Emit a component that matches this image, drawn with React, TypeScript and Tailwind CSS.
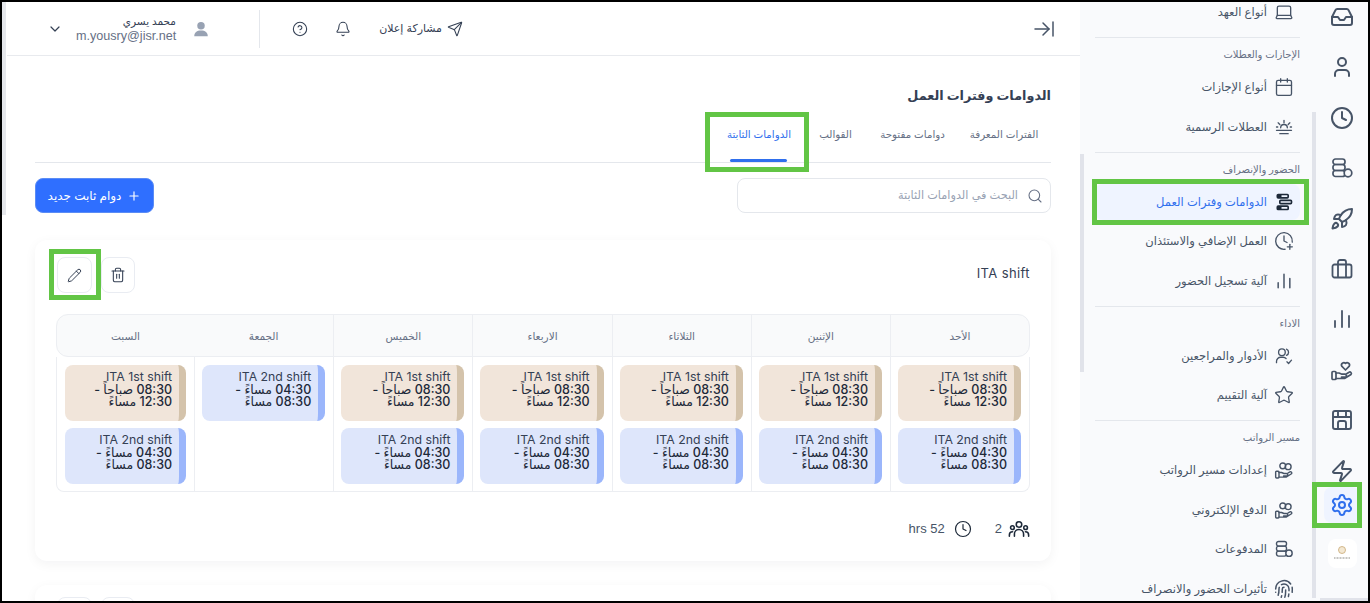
import {
  ArrowRightToLine,
  Bell,
  Calendar,
  ChevronDown,
  Clock,
  ClockPlus,
  CircleHelp,
  Fingerprint,
  Inbox,
  Laptop,
  Pencil,
  Plus,
  Rocket,
  Search,
  Send,
  Settings,
  Star,
  Trash2,
  User,
  Zap
} from 'lucide-react'
import type { ReactNode } from 'react'

type IconProps = { className?: string }

function DbCoin({ className }: IconProps) {
  return (
    <svg viewBox="0 0 24 24" fill="none" stroke="currentColor" strokeWidth="1.7" className={className}>
      <rect x="3" y="3" width="12" height="5.500" rx="2.500" />
      <rect x="3" y="8.500" width="12" height="6" rx="2.500" />
      <rect x="3" y="14.500" width="12" height="6" rx="2.500" />
      <circle cx="18" cy="17" r="3.800" fill="#f9fafc" />
    </svg>
  )
}

function Bars({ className }: IconProps) {
  return (
    <svg viewBox="0 0 24 24" fill="none" stroke="currentColor" strokeWidth="1.8" strokeLinecap="round" className={className}>
      <path d="M5 20v-6M12 20V4M19 20V9" />
    </svg>
  )
}

function Case({ className }: IconProps) {
  return (
    <svg viewBox="0 0 24 24" fill="none" stroke="currentColor" strokeWidth="1.8" className={className}>
      <rect x="2.500" y="7.500" width="19" height="13" rx="2" />
      <path d="M8 7.500V5a2 2 0 0 1 2-2h4a2 2 0 0 1 2 2v2.500M8 7.500v13M16 7.500v13" />
    </svg>
  )
}

function Shop({ className }: IconProps) {
  return (
    <svg viewBox="0 0 24 24" fill="none" stroke="currentColor" strokeWidth="1.9" className={className}>
      <rect x="3" y="3" width="18" height="18" rx="2" />
      <path d="M3 9h18M8 3v6M16 3v6M8 21v-6a2 2 0 0 1 2-2h4a2 2 0 0 1 2 2v6" />
    </svg>
  )
}

function Horizon({ className }: IconProps) {
  return (
    <svg viewBox="0 0 24 24" fill="none" stroke="currentColor" strokeWidth="1.6" strokeLinecap="round" className={className}>
      <path d="M3 16h18M7 20h10M8 13a4 4 0 0 1 8 0M12 4v3M5 7l2 2M19 7l-2 2M3 12h1.500M19.500 12H21" />
    </svg>
  )
}

function ShiftBars({ className }: IconProps) {
  return (
    <svg viewBox="0 0 24 24" fill="none" stroke="currentColor" strokeWidth="2" className={className}>
      <rect x="4" y="3" width="13" height="4" rx="1" />
      <rect x="7" y="10" width="14" height="4" rx="1" />
      <rect x="4" y="17" width="13" height="4" rx="1" />
      <path d="M4 5h5M4 19h5" strokeWidth="3" />
    </svg>
  )
}

function UsersCheck({ className }: IconProps) {
  return (
    <svg viewBox="0 0 24 24" fill="none" stroke="currentColor" strokeWidth="1.6" strokeLinecap="round" strokeLinejoin="round" className={className}>
      <circle cx="9.500" cy="7.500" r="4" />
      <path d="M15 3.800a4 4 0 0 1 0 7.400M3 20v-1.500a5 5 0 0 1 5-5h3a5 5 0 0 1 3.500 1.500M15.500 19l2 2 3.500-4" />
    </svg>
  )
}

// open hand with a cuff on the left, the top part changes per icon
function HandBase() {
  return (
    <>
      <rect x="2" y="13.500" width="4" height="8" rx="1" />
      <path d="M6 15h3l3 1.200h3a1.500 1.500 0 0 1 0 3h-3.500M6 20.500h8.500l6.500-4a1.500 1.500 0 0 0-2-2.200l-3.500 2.200" />
    </>
  )
}

function HandHeartIcon({ className }: IconProps) {
  return (
    <svg viewBox="0 0 24 24" fill="none" stroke="currentColor" strokeWidth="1.7" strokeLinejoin="round" strokeLinecap="round" className={className}>
      <HandBase />
      <path d="M15.500 12l-3.800-3.800a2.400 2.400 0 0 1 3.800-2.800 2.400 2.400 0 0 1 3.800 2.800z" />
    </svg>
  )
}

function HandCoinsIcon({ className }: IconProps) {
  return (
    <svg viewBox="0 0 24 24" fill="none" stroke="currentColor" strokeWidth="1.7" strokeLinejoin="round" strokeLinecap="round" className={className}>
      <HandBase />
      <circle cx="10.500" cy="7" r="3.500" />
      <circle cx="17" cy="8" r="3.500" />
    </svg>
  )
}

function TeamIcon({ className }: IconProps) {
  return (
    <svg viewBox="0 0 24 24" fill="none" stroke="currentColor" strokeWidth="1.7" strokeLinecap="round" className={className}>
      <circle cx="12" cy="7" r="3" />
      <circle cx="4.800" cy="10.500" r="2" />
      <circle cx="19.200" cy="10.500" r="2" />
      <path d="M7 20v-2.500a5 5 0 0 1 10 0V20M1.500 20v-1.500a3.500 3.500 0 0 1 3.500-3.500M22.500 20v-1.500A3.500 3.500 0 0 0 19 15" />
    </svg>
  )
}

const RAIL_ICONS = [Inbox, User, Clock, DbCoin, Rocket, Case, Bars, HandHeartIcon, Shop, Zap]

function NavRow({ icon, label, active }: { icon: ReactNode; label: string; active?: boolean }) {
  return (
    <div
      className={
        'h-[36px] flex items-center gap-[7px] pr-[6px] pl-[8px] rounded-lg text-[11.500px] ' +
        (active ? 'bg-[#eff4ff] text-[#2f6fed]' : 'text-[#475467]')
      }
    >
      <span className={'shrink-0 ' + (active ? 'text-[#1d2939]' : 'text-[#475467]')}>{icon}</span>
      <span className="whitespace-nowrap mt-[2px]">{label}</span>
    </div>
  )
}

function NavSection({ title, children }: { title: string; children: ReactNode }) {
  return (
    <div className="border-t border-[#e4e7ec] mt-[7px] pt-[9px]">
      <div className="h-[14px] leading-[14px] text-[10px] text-[#667085] mb-[8px]">{title}</div>
      <div className="flex flex-col gap-[3.500px]">{children}</div>
    </div>
  )
}

function GreenBox({ className }: IconProps) {
  return <span className={'absolute border-[5px] border-[#62c545] pointer-events-none ' + className} />
}

const DAYS = ['الأحد', 'الإثنين', 'الثلاثاء', 'الاربعاء', 'الخميس', 'الجمعة', 'السبت']

function ShiftChip({ second }: { second?: boolean }) {
  return (
    <div
      className={
        'h-[56px] rounded-lg border-r-[7px] pr-[7px] pt-[6px] text-[12px] leading-[12.500px] text-[#344054] ' +
        (second ? 'bg-[#dee6fb] border-[#9bb6fb]' : 'bg-[#f1e5da] border-[#d4c3ab]')
      }
    >
      <div className="text-[12.300px]">{second ? 'ITA 2nd shift' : 'ITA 1st shift'}</div>
      <div className="text-[12.500px] font-medium text-[#1d2939]">{second ? '04:30 مساءً -' : '08:30 صباحاً -'}</div>
      <div className="text-[12.500px] font-medium text-[#1d2939]">{second ? '08:30 مساءً' : '12:30 مساءً'}</div>
    </div>
  )
}

function IconButton({ children, narrow }: { children: ReactNode; narrow?: boolean }) {
  return (
    <button
      className={
        'h-[36px] flex items-center justify-center rounded-lg border border-[#e9ecf2] bg-white text-[#344054] ' +
        (narrow ? 'w-[34px]' : 'w-[35px]')
      }
    >
      {children}
    </button>
  )
}

function Tab({ label, width }: { label: string; width: string }) {
  return <span className={'h-[46px] flex items-center justify-center whitespace-nowrap ' + width}>{label}</span>
}

export default function App() {
  return (
    <div
      dir="rtl"
      className="relative w-[1370px] h-[603px] overflow-hidden border-2 border-black bg-white flex font-[Inter,'DejaVu_Sans',sans-serif]"
    >
      {/* Icon rail */}
      <aside className="relative z-10 w-[56px] shrink-0 bg-[#f9fafc] flex flex-col items-center">
        <span className="absolute left-0 top-[110px] w-[4px] h-[486px] bg-[#e1e3ea]" />
        <span className="absolute right-0 bottom-0 w-[48px] h-[3px] bg-[#e1e3ea]" />
        <div className="flex flex-col items-center gap-[20.400px] text-[#475467] mr-[-4px]">
          {RAIL_ICONS.map((Icon, i) => (
            <div key={i} className="h-[30px] flex items-center justify-center">
              <Icon className="w-[24px] h-[24px]" />
            </div>
          ))}
        </div>
        <div className="relative mt-[1px] w-[36px] h-[36px] mr-[-4px] rounded-lg bg-[#eff4ff] flex items-center justify-center text-[#2f6fed]">
          <Settings className="w-[24px] h-[24px]" />
          <GreenBox className="-top-[5px] -bottom-[5px] -left-[12px] -right-[2px]" />
        </div>
        <div className="mt-[16px] mr-[-4px] w-[29px] h-[29px] rounded-lg bg-white flex items-center justify-center">
          <svg viewBox="0 0 24 24" className="w-[24px] h-[24px]">
            <circle cx="12" cy="9" r="3.500" fill="#f3e8d3" stroke="#c9a873" strokeWidth="0.800" />
            <path d="M4 17h16" stroke="#8d8d86" strokeWidth="1.200" strokeDasharray="1 0.500" />
          </svg>
        </div>
      </aside>

      {/* Secondary nav */}
      <nav className="relative w-[232px] shrink-0 bg-[#f9fafc] overflow-hidden pr-[12px] pl-[15px]">
        <div className="-mt-[8px]">
          <NavRow icon={<Laptop className="w-[20px] h-[20px]" strokeWidth={1.6} />} label="أنواع العهد" />
          <NavSection title="الإجازات والعطلات">
            <NavRow icon={<Calendar className="w-[20px] h-[20px]" strokeWidth={1.6} />} label="أنواع الإجازات" />
            <NavRow icon={<Horizon className="w-[20px] h-[20px]" />} label="العطلات الرسمية" />
          </NavSection>
          <NavSection title="الحضور والإنصراف">
            <div className="relative">
              <NavRow icon={<ShiftBars className="w-[20px] h-[20px]" />} label="الدوامات وفترات العمل" active />
              <GreenBox className="-top-[5px] -bottom-[5px] -left-[3px] -right-[9px]" />
            </div>
            <NavRow icon={<ClockPlus className="w-[20px] h-[20px]" strokeWidth={1.6} />} label="العمل الإضافي والاستئذان" />
            <NavRow icon={<Bars className="w-[20px] h-[20px]" />} label="آلية تسجيل الحضور" />
          </NavSection>
          <NavSection title="الاداء">
            <NavRow icon={<UsersCheck className="w-[20px] h-[20px]" />} label="الأدوار والمراجعين" />
            <NavRow icon={<Star className="w-[20px] h-[20px]" strokeWidth={1.6} />} label="آلية التقييم" />
          </NavSection>
          <NavSection title="مسير الرواتب">
            <NavRow icon={<HandCoinsIcon className="w-[20px] h-[20px]" />} label="إعدادات مسير الرواتب" />
            <NavRow icon={<HandCoinsIcon className="w-[20px] h-[20px]" />} label="الدفع الإلكتروني" />
            <NavRow icon={<DbCoin className="w-[20px] h-[20px]" />} label="المدفوعات" />
            <NavRow icon={<Fingerprint className="w-[20px] h-[20px]" strokeWidth={1.8} />} label="تأثيرات الحضور والانصراف" />
          </NavSection>
        </div>
        <span className="absolute left-0 top-[152px] w-[4px] h-[218px] bg-[#e1e3ea]" />
      </nav>

      {/* Main column */}
      <main className="relative flex-1 min-w-0 bg-white overflow-hidden">
        <span className="absolute left-0 top-0 w-[4px] h-[213px] bg-[#e5e7eb]" />

        <header className="ml-[5px] h-[54px] border-b border-[#e8eaee] flex items-center justify-between pr-[24px] pl-[40px]">
          <ArrowRightToLine className="w-[24px] h-[24px] text-[#475467]" strokeWidth={1.5} />
          <div className="flex items-center text-[#344054]">
            <div className="w-[84px] flex items-center gap-[5px] text-[11px] whitespace-nowrap ml-[28px]">
              <Send className="w-[16px] h-[16px]" strokeWidth={1.6} />
              <span>مشاركة إعلان</span>
            </div>
            <Bell className="w-[16px] h-[16px] ml-[27px]" strokeWidth={1.6} />
            <CircleHelp className="w-[16px] h-[16px] ml-[32px]" strokeWidth={1.6} />
            <span className="w-px h-[38px] bg-[#e4e7ec] ml-[49px]" />
            <svg viewBox="0 0 24 24" fill="#98a2b3" className="w-[18px] h-[18px] ml-[16px]">
              <circle cx="12" cy="7.500" r="5" />
              <path d="M3 21.500c0-5 3.500-7.500 9-7.500s9 2.500 9 7.500z" />
            </svg>
            <div className="w-[100px] ml-[13px]">
              <div className="text-[10.500px] leading-[15px] text-[#344054] whitespace-nowrap">محمد يسري</div>
              <div dir="ltr" className="text-[12.600px] leading-[15px] text-[#667085] text-right whitespace-nowrap font-['Liberation_Sans',sans-serif]">
                m.yousry@jisr.net
              </div>
            </div>
            <ChevronDown className="w-[16px] h-[16px]" strokeWidth={1.8} />
          </div>
        </header>

        <div className="ml-[33px] mr-[29px] pt-[30px]">
          <h1 className="h-[20px] leading-[20px] text-[12.800px] font-bold text-[#344054]">الدوامات وفترات العمل</h1>

          <div className="mt-[6px] h-[51px] border-b border-[#e4e7ec] flex items-start gap-[21px] pr-[14px] text-[10.300px] text-[#667085]">
            <Tab label="الفترات المعرفة" width="w-[66px]" />
            <Tab label="دوامات مفتوحة" width="w-[75px]" />
            <Tab label="القوالب" width="w-[37px]" />
            <div className="relative h-[50px] w-[74px] flex justify-center text-[#2f6fed]">
              <span className="h-[46px] flex items-center whitespace-nowrap">الدوامات الثابتة</span>
              <span className="absolute bottom-0 left-[8px] right-[9px] h-[3px] rounded-full bg-[#2f6fed]" />
              <GreenBox className="top-0 -bottom-[10px] -left-[17px] -right-[13px]" />
            </div>
          </div>

          <div className="mt-[15px] flex items-center justify-between">
            <div className="w-[314px] h-[35px] rounded-lg border border-[#e4e7ec] flex items-center gap-[9px] pr-[7px] text-[11.300px] text-[#98a2b3]">
              <Search className="w-[16px] h-[16px] text-[#667085]" strokeWidth={1.6} />
              <span>البحث في الدوامات الثابتة</span>
            </div>
            <button className="w-[119px] h-[35px] rounded-lg bg-[#2f6fff] border border-[#5b8cf5] flex items-center justify-center gap-[6px] text-white text-[12px] font-medium whitespace-nowrap">
              <Plus className="w-[14px] h-[14px]" strokeWidth={2} />
              <span>دوام ثابت جديد</span>
            </button>
          </div>

          <section className="mt-[27px] h-[321px] rounded-xl bg-white shadow-[0_3px_12px_rgba(16,24,40,0.05)] px-[21px] pt-[17px]">
            <div className="h-[36px] flex items-center justify-between">
              <span className="text-[13px] tracking-[0.4px] text-[#344054] pb-[3px]">ITA shift</span>
              <div className="flex items-center gap-[9px] ml-[1px]">
                <IconButton narrow>
                  <Trash2 className="w-[16px] h-[16px]" strokeWidth={1.6} />
                </IconButton>
                <div className="relative">
                  <IconButton>
                    <Pencil className="w-[15px] h-[15px]" strokeWidth={1.6} />
                  </IconButton>
                  <GreenBox className="-top-[8px] -bottom-[7px] -left-[8px] -right-[9px]" />
                </div>
              </div>
            </div>

            <div className="mt-[21px]">
              <div className="h-[43px] grid grid-cols-[139px_139.200px_139.200px_139.200px_139.200px_139.200px_1fr] rounded-xl border border-[#eceef2] bg-[#f9fafb] text-[10.500px] text-[#667085]">
                {DAYS.map((day, i) => (
                  <div key={day} className={'flex items-center justify-center pt-[2px] ' + (i < 5 ? 'border-l border-[#eceef2]' : '')}>
                    {day}
                  </div>
                ))}
              </div>
              <div className="h-[135px] grid grid-cols-[139px_139.200px_139.200px_139.200px_139.200px_139.200px_1fr] border border-t-0 border-[#eceef2] rounded-b-lg">
                {DAYS.map((day, i) => (
                  <div
                    key={day}
                    className={'py-[8px] pr-[8px] flex flex-col gap-[7px] ' + (i < 6 ? 'pl-[7px] border-l border-[#eceef2]' : 'pl-[8px]')}
                  >
                    {i !== 5 && <ShiftChip />}
                    <ShiftChip second />
                  </div>
                ))}
              </div>
            </div>

            <div className="mt-[26px] flex items-center text-[13px] text-[#475467] font-['Liberation_Sans',sans-serif]">
              <TeamIcon className="w-[22px] h-[22px] text-[#1d2939]" />
              <span className="mr-[6px]">2</span>
              <Clock className="w-[18px] h-[18px] mr-[23px] text-[#1d2939]" strokeWidth={1.6} />
              <span className="mr-[9px]">52 hrs</span>
            </div>
          </section>

          <section className="mt-[24px] h-[100px] rounded-xl bg-white shadow-[0_3px_12px_rgba(16,24,40,0.05)] px-[21px] pt-[12px]">
            <div className="flex justify-end gap-[9px] ml-[1px]">
              <IconButton narrow>
                <Trash2 className="w-[16px] h-[16px]" strokeWidth={1.6} />
              </IconButton>
              <IconButton>
                <Pencil className="w-[15px] h-[15px]" strokeWidth={1.6} />
              </IconButton>
            </div>
          </section>
        </div>
      </main>
    </div>
  )
}
